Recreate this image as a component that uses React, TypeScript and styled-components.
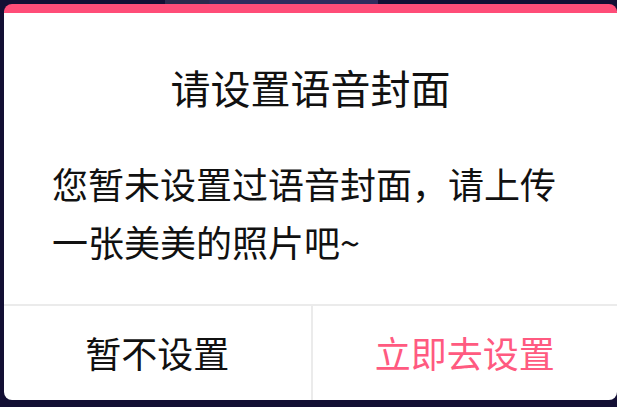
import React from "react";
import styled, { createGlobalStyle } from "styled-components";

const GlobalStyle = createGlobalStyle`
  html, body {
    margin: 0;
    padding: 0;
    background: #130f34;
    width: 617px;
    height: 407px;
    overflow: hidden;
  }
  body {
    font-family: "Noto Sans CJK SC", "Noto Sans", sans-serif;
  }
`;

// the page behind the dialog only peeks out along the top edge
const Stage = styled.div`
  width: 617px;
  height: 407px;
  padding: 4px 0 0 4px;
  box-sizing: border-box;
  background:
    linear-gradient(
        to right,
        transparent 165px,
        #2b2a4c 165px,
        #2b2a4c 209px,
        #2f2c5e 210px,
        #2f2c5e 378px,
        transparent 378px
      )
      top left / 100% 6px no-repeat,
    #130f34;
`;

const Dialog = styled.div`
  width: 613px;
  height: 396px;
  background: #fff;
  border-radius: 8px;
  border-top: 9px solid #ff4d78;
  box-sizing: border-box;
  overflow: hidden;
  display: flex;
  flex-direction: column;
`;

const Body = styled.div`
  padding: 54px 48px 34px;
  flex: 1;
`;

const Title = styled.h2`
  margin: 0;
  font-size: 40px;
  line-height: 40px;
  font-weight: 400;
  color: #111;
  text-align: center;
`;

const Message = styled.p`
  margin: 47px 0 0;
  font-size: 36px;
  line-height: 58px;
  color: #111;
`;

const Actions = styled.div`
  display: grid;
  grid-template-columns: 1fr 1fr;
  height: 96px;
  border-top: 2px solid #ebebeb;
  box-sizing: border-box;
`;

const ActionButton = styled.button<{ $primary?: boolean }>`
  border: none;
  background: none;
  padding: 0 0 2px;
  font-family: inherit;
  font-size: 36px;
  color: ${(p) => (p.$primary ? "#ff5a80" : "#111")};
  cursor: pointer;
  & + & {
    border-left: 2px solid #ebebeb;
  }
`;

export default function App() {
  return (
    <>
      <GlobalStyle />
      <Stage>
        <Dialog>
          <Body>
            <Title>请设置语音封面</Title>
            <Message>您暂未设置过语音封面，请上传一张美美的照片吧~</Message>
          </Body>
          <Actions>
            <ActionButton>暂不设置</ActionButton>
            <ActionButton $primary>立即去设置</ActionButton>
          </Actions>
        </Dialog>
      </Stage>
    </>
  );
}
